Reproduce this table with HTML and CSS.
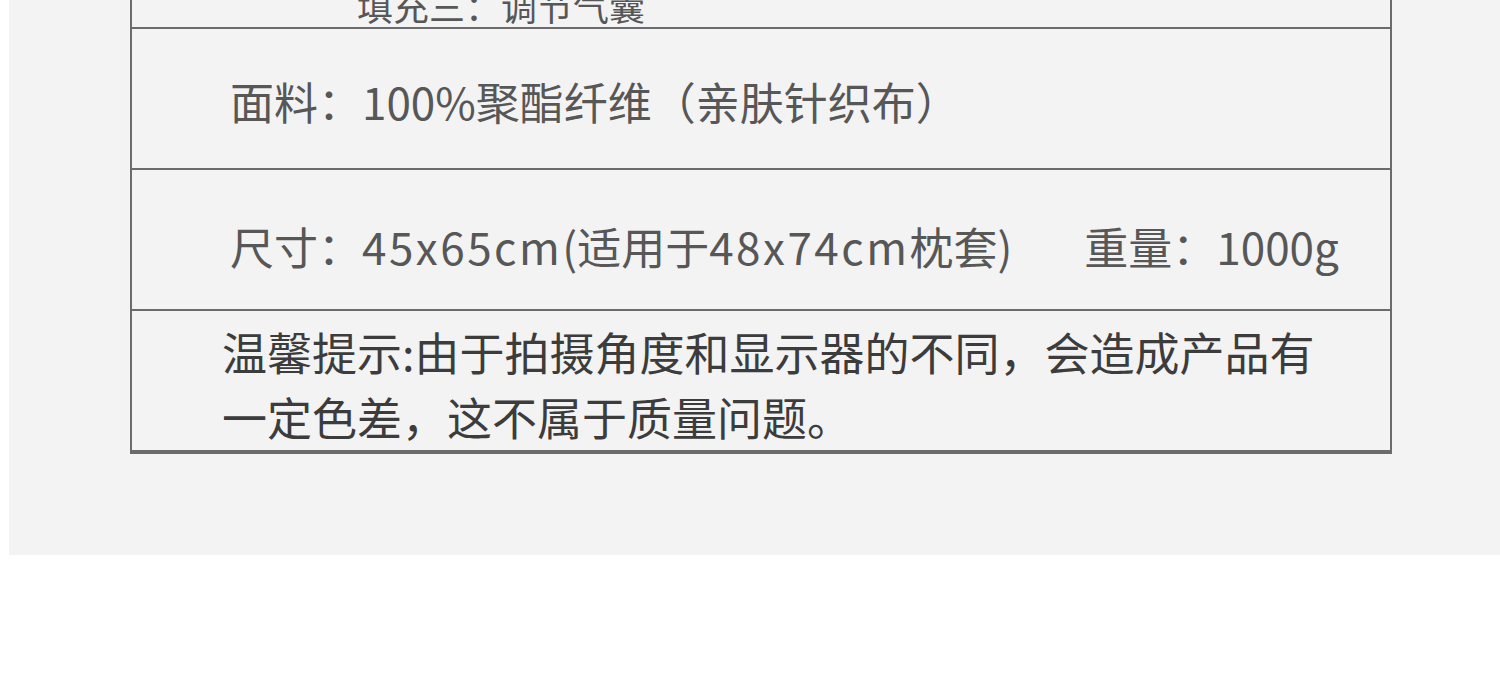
FILE: index.html
```html
<!DOCTYPE html>
<html lang="zh-CN">
<head>
  <meta charset="UTF-8" />
  <meta name="viewport" content="width=device-width, initial-scale=1.0" />
  <title>产品参数</title>
  <link rel="stylesheet" href="styles.css">
</head>
<body>
  <!-- 参数表 -->
  <div class="panel">
    <div class="spec">
      <div class="row row-fill">
        <p class="fill-text">填充三：调节气囊</p>
      </div>
      <div class="row row-fabric">
        <p class="spec-text">面料：100%聚酯纤维（亲肤针织布）</p>
      </div>
      <div class="row row-size">
        <p class="spec-text">尺寸：<span class="num">45x65cm</span>(适用于<span class="num">48x74cm</span>枕套)<span class="weight">重量：1000g</span></p>
      </div>
      <div class="row row-note">
        <p class="note">温馨提示:由于拍摄角度和显示器的不同，会造成产品有一定色差，这不属于质量问题。</p>
      </div>
    </div>
  </div>
</body>
</html>
```

FILE: styles.css
```css
* {
  box-sizing: border-box;
}

body {
  margin: 0;
  background-color: #fff;
  font-family: "Noto Sans CJK SC", "Noto Sans", sans-serif;
  overflow: hidden;
}

.panel {
  margin-left: 9px;
  height: 555px;
  background-color: #f3f3f3;
  padding-left: 121px;
  overflow: hidden;
}

.spec {
  width: 1262px;
  margin-top: -80px;
  border: 2px solid #6b6b6b;
  border-top: none;
}

.row {
  height: 141px;
  border-bottom: 2px solid #6b6b6b;
  display: flex;
  align-items: center;
  padding: 14px 0 0 98px;
}

.row-fabric {
  padding-top: 6px;
}

.row-fill {
  height: 109px;
  padding: 0;
  align-items: flex-end;
}

.row-note {
  height: 141px;
  align-items: flex-start;
  padding: 8px 0 0 90px;
}

p {
  margin: 0;
  color: #575757;
}

.fill-text {
  font-size: 36px;
  line-height: 1;
  margin: 0 0 4px 225px;
}

.spec-text {
  font-size: 44px;
  line-height: 1.2;
  white-space: nowrap;
}

.num {
  letter-spacing: 2.5px;
}

.weight {
  margin-left: 72px;
}

.note {
  width: 1110px;
  font-size: 45px;
  line-height: 65px;
  color: #3c3c3c;
}
```
